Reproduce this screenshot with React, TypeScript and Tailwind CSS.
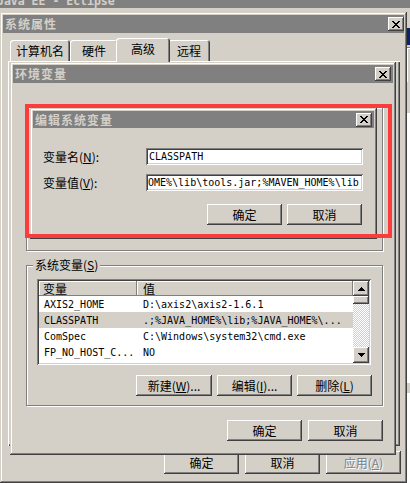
import React from "react";

const ui = "font-['Noto_Sans_CJK_SC',sans-serif]";
const mono = "font-['DejaVu_Sans_Mono',monospace]";

const winFrame =
  "shadow-[inset_-1px_-1px_#404040,inset_1px_1px_#d4d0c8,inset_-2px_-2px_#808080,inset_2px_2px_#ffffff]";
const raised =
  "shadow-[inset_-1px_-1px_#404040,inset_1px_1px_#ffffff,inset_-2px_-2px_#808080,inset_2px_2px_#d4d0c8]";
const sunken =
  "shadow-[inset_1px_1px_#808080,inset_-1px_-1px_#ffffff,inset_2px_2px_#404040,inset_-2px_-2px_#d4d0c8]";
const etched = "border border-[#808080] shadow-[inset_1px_1px_#ffffff,1px_1px_#ffffff]";

const CloseX = () => (
  <svg width="8" height="7" viewBox="0 0 8 7" shapeRendering="crispEdges">
    <path
      d="M0 0h2v1h-2zM6 0h2v1h-2zM1 1h2v1h-2zM5 1h2v1h-2zM2 2h4v1h-4zM3 3h2v1h-2zM2 4h4v1h-4zM1 5h2v1h-2zM5 5h2v1h-2zM0 6h2v1h-2zM6 6h2v1h-2z"
      fill="#000"
    />
  </svg>
);

const Arrow = ({ down }: { down?: boolean }) => (
  <svg width="7" height="4" viewBox="0 0 7 4" shapeRendering="crispEdges">
    <path
      d={down ? "M0 0h7v1h-7zM1 1h5v1h-5zM2 2h3v1h-3zM3 3h1v1h-1z" : "M3 0h1v1h-1zM2 1h3v1h-3zM1 2h5v1h-5zM0 3h7v1h-7z"}
      fill="#000"
    />
  </svg>
);

const TitleBar = ({ title, className = "" }: { title: string; className?: string }) => (
  <div className={`flex shrink-0 items-center justify-between bg-[#808080] pl-[2px] ${className}`}>
    <span className={`${ui} text-[12px] font-bold leading-none tracking-[1px] text-[#d4d0c8]`}>{title}</span>
    <div className={`flex h-[14px] w-[16px] items-center justify-center bg-[#d4d0c8] ${raised}`}>
      <CloseX />
    </div>
  </div>
);

const Btn = ({ children, className = "" }: { children?: React.ReactNode; className?: string }) => (
  <div className={`flex shrink-0 items-center justify-center bg-[#d4d0c8] text-[12px] leading-none ${raised} ${className}`}>
    {children}
  </div>
);

const Tab = ({ children, className = "", active }: { children: React.ReactNode; className?: string; active?: boolean }) => (
  <div
    className={`flex items-center justify-center rounded-t-[3px] bg-[#d4d0c8] text-[12px] leading-none shadow-[inset_1px_1px_#ffffff,inset_-1px_0_#404040,inset_-2px_0_#808080] ${
      active ? "relative z-10 -mx-[2px] -mb-px h-[24px] pb-[2px]" : "h-[21px]"
    } ${className}`}
  >
    {children}
  </div>
);

const rows = [
  ["AXIS2_HOME", "D:\\axis2\\axis2-1.6.1"],
  ["CLASSPATH", ".;%JAVA_HOME%\\lib;%JAVA_HOME%\\..."],
  ["ComSpec", "C:\\Windows\\system32\\cmd.exe"],
  ["FP_NO_HOST_C...", "NO"],
];

const VarList = () => (
  <div className={`ml-[10px] flex h-[86px] w-[334px] shrink-0 bg-white p-[2px] ${sunken}`}>
    <div className="flex flex-1 flex-col">
      <div className="flex h-[15px] shrink-0 text-[12px] leading-none">
        <div className="flex w-[98px] items-center bg-[#d4d0c8] pl-[4px] shadow-[inset_-1px_-1px_#808080,inset_1px_1px_#ffffff]">变量</div>
        <div className="flex flex-1 items-center bg-[#d4d0c8] pl-[6px] shadow-[inset_-1px_-1px_#808080,inset_1px_1px_#ffffff]">值</div>
      </div>
      {rows.map((r, i) => (
        <div key={r[0]} className={`flex h-[16px] shrink-0 items-center ${mono} text-[10px] text-black ${i === 1 ? "bg-[#d4d0c8]" : ""}`}>
          <span className="w-[98px] pl-[5px]">{r[0]}</span>
          <span className="whitespace-pre pl-[6px]">{r[1]}</span>
        </div>
      ))}
    </div>
    <div className="flex w-[16px] flex-col bg-[image:repeating-conic-gradient(#d4d0c8_0%_25%,#ffffff_0%_50%)] bg-[length:2px_2px]">
      <div className={`flex h-[15px] items-center justify-center bg-[#d4d0c8] ${raised}`}>
        <Arrow />
      </div>
      <div className={`h-[8px] bg-[#d4d0c8] ${raised}`} />
      <div className="flex-1" />
      <div className={`flex h-[16px] items-center justify-center bg-[#d4d0c8] ${raised}`}>
        <Arrow down />
      </div>
    </div>
  </div>
);

export default function App() {
  return (
    <div className={`relative h-[483px] w-[410px] overflow-hidden bg-[#d4d0c8] ${ui} text-black`}>
      {/* eclipse window title peeking at the top */}
      <div className="absolute left-0 top-0 h-[8px] w-full overflow-hidden bg-[#808080]">
        <div className={`-ml-[3px] -mt-[6px] ${mono} whitespace-pre text-[11.5px] font-bold leading-[14px] text-[#d4d0c8]`}>
          Java EE - Eclipse
        </div>
      </div>

      {/* window on the right */}
      <div className="absolute left-[405px] top-[26px] flex h-[460px] w-[10px] flex-col bg-[#d4d0c8] pl-[1px] pt-[2px] shadow-[inset_1px_0_#ffffff]">
        <div className="h-[17px] shrink-0 bg-[#0a246a]" />
        <div className="mt-[2px] h-[35px] shrink-0 shadow-[inset_1px_1px_#808080,inset_2px_2px_#ffffff]" />
        <div className="mt-[31px] h-[270px] shrink-0 bg-white" />
        <div className="h-[10px] shrink-0" />
        <div className="flex-1 bg-white" />
      </div>

      {/* 系统属性 */}
      <div className={`absolute left-0 top-[12px] flex h-[471px] w-[407px] flex-col bg-[#d4d0c8] p-[3px] ${winFrame}`}>
        <TitleBar title="系统属性" className="h-[18px]" />
        <div className="mt-[5px] flex h-[23px] shrink-0 items-end pl-[7px]">
          <Tab className="w-[60px]">计算机名</Tab>
          <Tab className="w-[48px]">硬件</Tab>
          <Tab active className="w-[54px]">高级</Tab>
          <Tab className="w-[42px]">远程</Tab>
        </div>
        <div className="ml-[5px] h-[385px] w-[392px] shrink-0 shadow-[inset_1px_1px_#ffffff,inset_-1px_-1px_#404040,inset_-2px_-2px_#808080]" />
        <div className="mt-[5px] flex justify-end gap-[6px] pr-[3px]">
          <Btn className="h-[23px] w-[75px] text-black">确定</Btn>
          <Btn className="h-[23px] w-[75px] text-black">取消</Btn>
          <Btn className="h-[23px] w-[75px] text-[#808080] [text-shadow:1px_1px_#ffffff]">应用(<u>A</u>)</Btn>
        </div>
      </div>

      {/* 环境变量 */}
      <div className={`absolute left-[10px] top-[62px] flex h-[393px] w-[386px] flex-col bg-[#d4d0c8] p-[3px] ${winFrame}`}>
        <TitleBar title="环境变量" className="h-[18px] pr-[2px]" />
        {/* user variables, hidden under the edit dialog except the button edges */}
        <div className={`ml-[13px] mt-[24px] flex h-[144px] w-[357px] shrink-0 flex-col justify-end pb-[12px] ${etched}`}>
          <div className="flex justify-end gap-[5px] pr-[10px]">
            <Btn className="h-[21px] w-[76px]" />
            <Btn className="h-[21px] w-[75px]" />
            <Btn className="h-[21px] w-[75px]" />
          </div>
        </div>
        <div className={`ml-[13px] mt-[14px] flex h-[141px] w-[357px] shrink-0 flex-col ${etched}`}>
          <div className="-mt-[7px] ml-[6px] w-fit bg-[#d4d0c8] px-[2px] text-[12px] leading-[12px]">
            系统变量(<u>S</u>)
          </div>
          <div className="mt-[8px]">
            <VarList />
          </div>
          <div className="mt-[10px] flex justify-end gap-[5px] pr-[10px]">
            <Btn className="h-[21px] w-[76px] text-black">新建(<u>W</u>)...</Btn>
            <Btn className="h-[21px] w-[75px] text-black">编辑(<u>I</u>)...</Btn>
            <Btn className="h-[21px] w-[75px] text-black">删除(<u>L</u>)</Btn>
          </div>
        </div>
        <div className="mt-[14px] flex justify-end gap-[6px] pr-[10px]">
          <Btn className="h-[21px] w-[75px] text-black">确定</Btn>
          <Btn className="h-[21px] w-[75px] text-black">取消</Btn>
        </div>
      </div>

      {/* 编辑系统变量 */}
      <div className={`absolute left-[30px] top-[108px] flex h-[131px] w-[347px] flex-col bg-[#d4d0c8] p-[3px] ${winFrame}`}>
        <TitleBar title="编辑系统变量" className="h-[17px] pr-[2px]" />
        <div className="ml-[10px] mt-[20px] flex h-[17px] items-center">
          <span className="w-[103px] text-[12px] leading-none">变量名(<u>N</u>):</span>
          <div className={`flex h-[17px] w-[217px] items-center bg-white pl-[3px] ${mono} text-[10px] ${sunken}`}>CLASSPATH</div>
        </div>
        <div className="ml-[10px] mt-[9px] flex h-[17px] items-center">
          <span className="w-[103px] text-[12px] leading-none">变量值(<u>V</u>):</span>
          <div className={`flex h-[17px] w-[217px] items-center overflow-hidden whitespace-pre bg-white pl-[2px] ${mono} text-[10px] ${sunken}`}>
            OME%\lib\tools.jar;%MAVEN_HOME%\lib
          </div>
        </div>
        <div className="mt-[13px] flex justify-end gap-[5px] pr-[12px]">
          <Btn className="h-[21px] w-[75px] text-black">确定</Btn>
          <Btn className="h-[21px] w-[75px] text-black">取消</Btn>
        </div>
      </div>

      {/* red highlight */}
      <div className="absolute left-[25px] top-[104px] h-[134px] w-[367px] border-[4px] border-[#fa3c3c]" />
    </div>
  );
}
